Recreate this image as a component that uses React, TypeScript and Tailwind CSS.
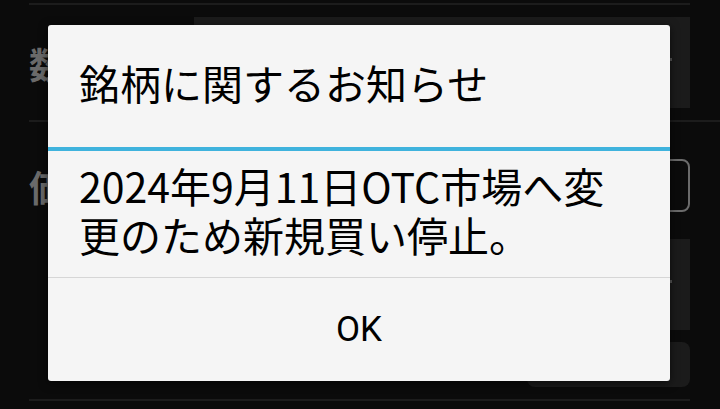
import React from 'react';

const jp = { fontFamily: '"Noto Sans CJK JP", "Noto Sans", sans-serif' };

function FormBehind() {
  return (
    <div className="flex flex-col pl-[29px]" style={jp}>
      <div className="mt-[3px] mr-[30px] h-[2px] bg-[#1c1c1c]" />

      {/* 数量 */}
      <div className="flex h-[115px] items-center pr-[30px]">
        <span className="w-[165px] text-[36px] font-bold text-[#6a6a6a]">数量</span>
        <div className="relative h-[91px] flex-1 bg-[#1b1b1b]">
          <div className="absolute right-[18px] top-[41px] h-[3px] w-[4px] bg-[#555]" />
        </div>
      </div>
      <div className="h-[2px] bg-[#1c1c1c]" />

      {/* 価格 */}
      <div className="flex pr-[30px] pt-[37px]">
        <div className="flex h-[53px] w-[165px] items-center">
          <span className="text-[36px] font-bold text-[#6a6a6a]">価格</span>
        </div>
        <div className="flex flex-1 flex-col">
          <div className="h-[53px] rounded-lg border-2 border-[#6b6b6b]" />
          <div className="relative mt-[27px] h-[91px] bg-[#1b1b1b]">
            <div className="absolute right-[18px] top-[41px] h-[3px] w-[4px] bg-[#555]" />
          </div>
          <div className="mt-[12px] h-[45px] w-[163px] self-end rounded-lg bg-[#1b1b1b]" />
        </div>
      </div>
      <div className="mt-[12px] mr-[30px] h-[2px] bg-[#1c1c1c]" />
    </div>
  );
}

function NoticeDialog() {
  return (
    <div
      className="absolute left-[48px] top-[25px] flex w-[622px] flex-col overflow-hidden rounded-[3px] bg-[#f5f5f5] shadow-[0_2px_10px_rgba(0,0,0,0.6)]"
      style={jp}
    >
      <div className="flex h-[122px] items-center pb-[8px] pl-[31px]">
        <h2 className="text-[41px] font-normal leading-[48px] text-black">銘柄に関するお知らせ</h2>
      </div>
      <div className="h-[4px] bg-[#3fb3dd]" />
      <div className="h-[126px] pl-[31px] pt-[10px]">
        <p className="text-[41px] leading-[49px] text-black">
          2024年9月11日OTC市場へ変
          <br />
          更のため新規買い停止。
        </p>
      </div>
      <div className="h-[1px] bg-[#d6d6d6]" />
      <button
        className="flex h-[103px] items-center justify-center text-[35px] leading-none text-black"
        style={{ fontFamily: 'Roboto, "Liberation Sans", sans-serif' }}
      >
        OK
      </button>
    </div>
  );
}

export default function App() {
  return (
    <div className="relative h-[409px] w-[720px] overflow-hidden bg-[#0b0b0b]">
      <FormBehind />
      <NoticeDialog />
    </div>
  );
}
